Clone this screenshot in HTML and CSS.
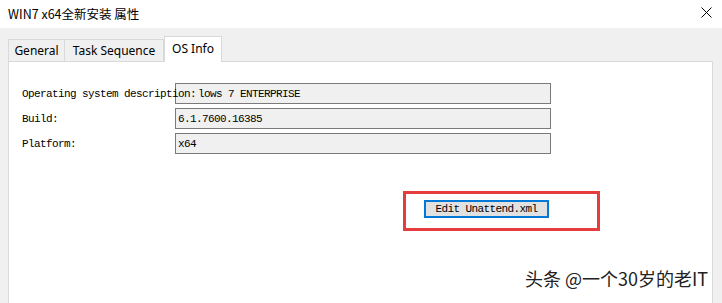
FILE: index.html
```html
<!DOCTYPE html>
<html lang="zh-CN">
<head>
  <meta charset="UTF-8" />
  <title>WIN7 x64全新安装 属性</title>
  <link rel="stylesheet" href="styles.css">
</head>
<body>

<div class="titlebar">
  <span class="title">WIN7 x64全新安装 属性</span>
  <svg class="close" width="11" height="11" viewBox="0 0 11 11">
    <path d="M0.5 0.5 L10.5 10.5 M10.5 0.5 L0.5 10.5" stroke="#000" stroke-width="1" fill="none"/>
  </svg>
</div>

<div class="dialog">
  <div class="tabs">
    <div class="tab tab-general">General</div>
    <div class="tab tab-task">Task Sequence</div>
    <div class="tab tab-os active">OS Info</div>
  </div>

  <div class="panel">
    <div class="fields">
      <div class="label">Operating system description:</div>
      <div class="box box-first">lows 7 ENTERPRISE</div>

      <div class="label">Build:</div>
      <div class="box">6.1.7600.16385</div>

      <div class="label">Platform:</div>
      <div class="box">x64</div>
    </div>

    <div class="mark">
      <button class="edit">Edit Unattend.xml</button>
    </div>
  </div>
</div>

<div class="watermark">头条 @一个30岁的老IT</div>

</body>
</html>
```

FILE: styles.css
```css
html, body {
  margin: 0;
  height: 303px;
  overflow: hidden;
}
body {
  background: #f0f0f0;
  font-family: "Noto Sans", "Noto Sans CJK SC", sans-serif;
  position: relative;
}
.titlebar {
  height: 28px;
  background: white;
  display: flex;
  align-items: center;
  justify-content: space-between;
  padding: 0 10px 0 8px;
}
.title {
  font-family: "Noto Sans CJK SC", sans-serif;
  font-size: 12.5px;
  color: #000;
  margin-top: -2px;
}
.close {
  margin-top: -4px;
}
.dialog {
  padding: 9px 9px 0 8px;
}
.tabs {
  display: flex;
  height: 24px;
  align-items: flex-end;
  position: relative;
  z-index: 1;
}
.tab {
  height: 22px;
  box-sizing: border-box;
  border: 1px solid #d9d9d9;
  border-bottom: none;
  background: #f0f0f0;
  font-size: 12px;
  line-height: 21px;
  color: #000;
  text-align: center;
}
.tab + .tab {
  border-left: none;
}
.tab-general { width: 57px; }
.tab-task { width: 99px; }
.tab-os { width: 58px; }
.tab.active {
  background: white;
  height: 26px;
  margin-bottom: -1px;
  line-height: 24px;
  border-left: 1px solid #d9d9d9;
}
.panel {
  background: white;
  border: 1px solid #d9d9d9;
  border-bottom: none;
  height: 242px;
  padding: 21px 0 0 13px;
  box-sizing: border-box;
}
.fields {
  display: grid;
  grid-template-columns: 153px 376px;
  grid-auto-rows: 21px;
  row-gap: 4px;
  font-family: "Liberation Mono", monospace;
  font-size: 11px;
  letter-spacing: -0.6px;
  color: #000;
}
.label {
  display: flex;
  align-items: center;
  white-space: nowrap;
  position: relative;
  z-index: 1;
  width: 153px;
}
.box {
  background: #f0f0f0;
  border: 1px solid #7a7a7a;
  box-sizing: border-box;
  display: flex;
  align-items: center;
  padding-left: 2px;
  white-space: nowrap;
}
.box-first {
  padding-left: 22px;
}
.mark {
  margin: 37px 0 0 381px;
  width: 197px;
  height: 40px;
  box-sizing: border-box;
  border: 3px solid #e53c3c;
  padding: 6px 0 0 18px;
}
.edit {
  display: block;
  width: 125px;
  height: 18px;
  box-sizing: border-box;
  border: 2px solid #0078d7;
  background: #e1e1e1;
  padding: 0;
  font-family: "Liberation Mono", monospace;
  font-size: 11px;
  letter-spacing: -0.6px;
  color: #000;
  line-height: 14px;
}
.watermark {
  position: absolute;
  right: 14px;
  bottom: 12px;
  font-family: "Noto Sans CJK SC", sans-serif;
  font-size: 18px;
  color: #222;
  text-shadow: 0 0 2px #fff, 0 0 2px #fff;
}
```
